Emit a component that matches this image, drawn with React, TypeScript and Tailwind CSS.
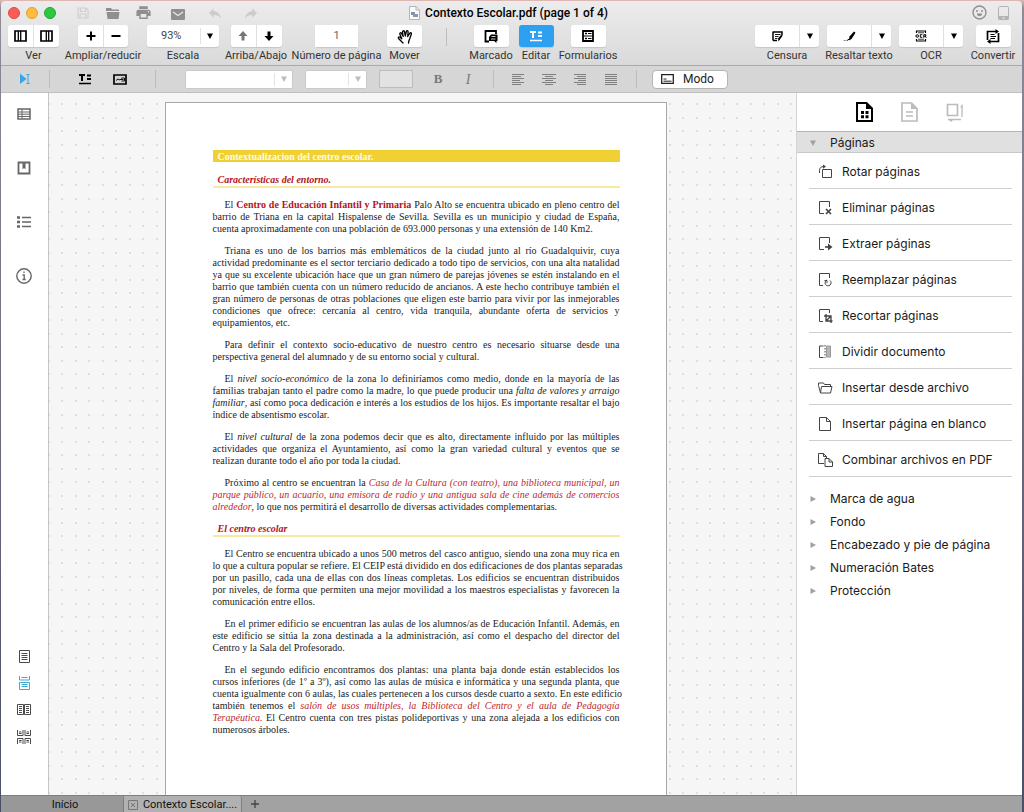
import type { ReactNode } from "react";
import { MdPrint, MdReply } from "react-icons/md";

/* ---------- small helpers ---------- */

type IconProps = { w?: number; h?: number; className?: string; children: ReactNode };

const Icon = ({ w = 16, h = 16, className = "", children }: IconProps) => (
  <svg
    width={w}
    height={h}
    viewBox={`0 0 ${w} ${h}`}
    fill="none"
    stroke="currentColor"
    aria-hidden="true"
    className={`shrink-0 ${className}`}
  >
    {children}
  </svg>
);

const ArrowDown = ({ className = "" }: { className?: string }) => (
  <Icon w={6} h={6} className={className}>
    <path d="M0 0.500h6L3 6z" fill="currentColor" stroke="none" />
  </Icon>
);

const Group = ({ label, width, children }: { label: string; width: string; children: ReactNode }) => (
  <div className={`flex shrink-0 flex-col items-center ${width}`}>
    <div className="flex h-[22px] rounded-[3px] shadow-[0_1px_1px_rgba(0,0,0,0.12)]">{children}</div>
    <span className="mt-[2px] text-[11px] leading-[14px] whitespace-nowrap text-[#333]">{label}</span>
  </div>
);

const Btn = ({ label, className = "", children }: { label: string; className?: string; children: ReactNode }) => (
  <button type="button" aria-label={label} className={`flex h-[22px] items-center justify-center bg-white ${className}`}>
    {children}
  </button>
);

const SplitButton = ({ label, children }: { label: string; children: ReactNode }) => (
  <>
    <Btn label={label} className="w-[44px] rounded-l-[3px]">
      {children}
    </Btn>
    <Btn label={`${label}: opciones`} className="w-[20px] rounded-r-[3px] border-l border-[#e0e0e0]">
      <ArrowDown />
    </Btn>
  </>
);

const Divider = () => <div className="h-[18px] w-px shrink-0 bg-[#bdbdbd]" />;

/* ---------- title bar ---------- */

const TitleBar = () => (
  <div className="flex h-[23px] items-center">
    <div className="flex flex-1 items-center pl-[7px]">
      <div className="flex gap-[6px]">
        <button type="button" aria-label="Cerrar" className="size-3 rounded-full border border-[#e2463f] bg-[#fc5b57]" />
        <button type="button" aria-label="Minimizar" className="size-3 rounded-full border border-[#e0a032] bg-[#fdbc40]" />
        <button type="button" aria-label="Maximizar" className="size-3 rounded-full border border-[#1fa534] bg-[#29c940]" />
      </div>
      <div className="flex items-center pl-[21px] text-[#8f8f8f]">
        <button type="button" aria-label="Guardar" className="w-[14px] text-[#cfcfcf]">
          <Icon w={12} h={12}>
            <path d="M1 1h8l2 2v8H1z M3.500 1v3.500h5V1 M3 11V7h6v4" strokeWidth="1.2" />
          </Icon>
        </button>
        <button type="button" aria-label="Abrir" className="ml-[15px] w-[14px]">
          <Icon w={14} h={12}>
            <path d="M0 1h5l1 1.500h7V4H0z M0.500 5h13L12.500 12h-11z" fill="currentColor" stroke="none" />
          </Icon>
        </button>
        <button type="button" aria-label="Imprimir" className="ml-[15px] w-4">
          <MdPrint size={17} />
        </button>
        <button type="button" aria-label="Enviar por correo" className="ml-[20px] w-[14px] pt-[3px]">
          <Icon w={14} h={11}>
            <rect width="14" height="11" rx="1" fill="currentColor" stroke="none" />
            <path d="M2 3l5 3.500L12 3" stroke="#e6e6e6" strokeWidth="1.4" />
          </Icon>
        </button>
        <button type="button" aria-label="Deshacer" className="ml-[22px] w-[15px] text-[#cccccc]">
          <MdReply size={16} />
        </button>
        <button type="button" aria-label="Rehacer" className="ml-[21px] w-[15px] text-[#cccccc]">
          <MdReply size={16} className="-scale-x-100" />
        </button>
      </div>
    </div>
    <h1 className="flex items-center gap-[5px] text-[12px] leading-4 font-medium text-black">
      <Icon w={11} h={14}>
        <path d="M0.500 0.500h6.500l3.500 3.500v9.500h-10z" fill="#fafafa" stroke="#b5b5b5" />
        <path d="M7 0.500v3.500h3.500" stroke="#b5b5b5" />
        <rect x="2" y="6" width="4" height="3" fill="#8391a3" stroke="none" />
        <rect x="4" y="8" width="5" height="3" fill="#8b98a8" stroke="none" />
      </Icon>
      Contexto Escolar.pdf (page 1 of 4)
    </h1>
    <div className="flex flex-1 items-center justify-end gap-[11px] pr-[13px] text-[#8f8f8f]">
      <button type="button" aria-label="Comentarios">
        <Icon w={15} h={15}>
          <circle cx="7.5" cy="7.5" r="6.5" strokeWidth="1.4" />
          <circle cx="5" cy="6" r="1" fill="currentColor" stroke="none" />
          <circle cx="10" cy="6" r="1" fill="currentColor" stroke="none" />
          <path d="M5 8.500h5c0 3.500-5 3.500-5 0z" fill="currentColor" stroke="none" />
        </Icon>
      </button>
      <button type="button" aria-label="Dispositivo" className="text-[#b3b3b3]">
        <Icon w={11} h={14}>
          <rect x="0.5" y="0.5" width="10" height="13" rx="1" />
          <path d="M0.500 10h10v3.500h-10z" fill="currentColor" stroke="none" />
          <path d="M4.500 12h2" stroke="#fff" />
        </Icon>
      </button>
    </div>
  </div>
);

/* ---------- main toolbar ---------- */

const TextEditIcon = () => (
  <Icon w={14} h={12}>
    <path d="M1 2h6M9 2.500h4M9 6h4" strokeWidth="1.800" />
    <path d="M4 1.500v6.500" strokeWidth="2" />
    <path d="M1 10.500h12" strokeWidth="1.700" />
  </Icon>
);

const Toolbar = () => (
  <div className="flex h-[41px] justify-between pt-px pr-[7px] pl-[7px] text-black">
    <div className="flex gap-[7px]">
      <Group label="Ver" width="w-[51px]">
        <Btn label="Panel izquierdo" className="w-[25px] rounded-l-[3px]">
          <Icon w={13} h={12}>
            <path d="M1 1h11v10H1z" strokeWidth="1.700" />
            <path d="M4.300 1v10M6.700 1v10" strokeWidth="1.300" />
          </Icon>
        </Btn>
        <Btn label="Panel derecho" className="w-[26px] rounded-r-[3px] border-l border-[#e0e0e0]">
          <Icon w={13} h={12}>
            <path d="M1 1h11v10H1z" strokeWidth="1.700" />
            <path d="M6.300 1v10M8.700 1v10" strokeWidth="1.300" />
          </Icon>
        </Btn>
      </Group>
      <Group label="Ampliar/reducir" width="w-[74px]">
        <Btn label="Ampliar" className="w-[25px] rounded-l-[3px]">
          <Icon w={10} h={10}>
            <path d="M5 0.500v9M0.500 5h9" strokeWidth="2" />
          </Icon>
        </Btn>
        <Btn label="Reducir" className="w-[25px] rounded-r-[3px] border-l border-[#e0e0e0]">
          <Icon w={10} h={10}>
            <path d="M0.500 5h9" strokeWidth="2" />
          </Icon>
        </Btn>
      </Group>
      <Group label="Escala" width="w-[72px]">
        <div className="flex w-[72px] items-center rounded-[3px] bg-white">
          <select
            aria-label="Escala"
            className="h-[22px] min-w-0 flex-1 appearance-none bg-transparent pl-[14px] text-[11px] text-[#444] outline-none"
          >
            <option>93%</option>
          </select>
          <span className="flex h-[16px] w-[19px] items-center justify-center border-l border-[#e3e3e3]">
            <ArrowDown />
          </span>
        </div>
      </Group>
      <Group label="Arriba/Abajo" width="w-[60px]">
        <Btn label="Página anterior" className="w-[25px] rounded-l-[3px] text-[#777]">
          <Icon w={10} h={10}>
            <path d="M5 0l4.500 5H6.500v4.500h-3V5h-3z" fill="currentColor" stroke="none" />
          </Icon>
        </Btn>
        <Btn label="Página siguiente" className="w-[26px] rounded-r-[3px] border-l border-[#e0e0e0]">
          <Icon w={10} h={10}>
            <path d="M5 10l4.500-5H6.500v-4.500h-3V5h-3z" fill="currentColor" stroke="none" />
          </Icon>
        </Btn>
      </Group>
      <Group label="Número de página" width="w-[87px]">
        <input
          aria-label="Número de página"
          defaultValue="1"
          className="w-[43px] bg-white text-center text-[11px] text-[#666] outline-none"
        />
      </Group>
      <Group label="Mover" width="w-[35px]">
        <Btn label="Mover" className="w-[35px] rounded-[3px]">
          <Icon w={16} h={15}>
            <path
              d="M6 14L3.500 11.500 1.500 9.500C0.700 8.200 2 7.500 3 8.300L4.800 9.800 2.800 5C2.500 3.700 4 3.200 4.600 4.500L6.200 7.500 5.500 3C5.400 1.500 7 1.300 7.500 2.800L8.300 7 9.300 2.500C9.700 1.100 11.300 1.400 11.100 2.900L10.700 7.500 12.700 4.300C13.500 3.200 14.800 3.900 14.300 5.200L12.800 9.500 12 11.500 11.500 14"
              strokeWidth="1.300"
              strokeLinejoin="round"
              strokeLinecap="round"
            />
          </Icon>
        </Btn>
      </Group>
      <div className="mt-[3px] ml-[17px]">
        <Divider />
      </div>
      <div className="ml-[16px] flex gap-[5px]">
        <Group label="Marcado" width="w-[42px]">
          <Btn label="Marcado" className="w-[35px] rounded-[3px]">
            <Icon w={14} h={13}>
              <path d="M5 11.500H1.500v-10.500h10.500v3" strokeWidth="1.800" />
              <path d="M5 7l2-2.500h6.500V11h-1v2l-2.500-2H5z" fill="currentColor" stroke="none" />
              <path d="M7.500 6.500h4M7 9h4.500" stroke="#fff" strokeWidth="0.800" />
            </Icon>
          </Btn>
        </Group>
        <Group label="Editar" width="w-[38px]">
          <button
            type="button"
            aria-label="Editar"
            aria-pressed="true"
            className="flex h-[22px] w-[35px] items-center justify-center rounded-[3px] bg-[#2ea0f2] text-white"
          >
            <TextEditIcon />
          </button>
        </Group>
        <Group label="Formularios" width="w-[56px]">
          <Btn label="Formularios" className="w-[35px] rounded-[3px]">
            <Icon w={12} h={12}>
              <path d="M1 1h10v10H1z" strokeWidth="1.800" />
              <path d="M1 6h10M6 3.500h3.500M6 8.500h3.500" strokeWidth="1.200" />
              <path d="M3 3.500h2M3 8.500h2" strokeWidth="1.600" />
            </Icon>
          </Btn>
        </Group>
      </div>
    </div>
    <div className="flex gap-[8px]">
      <Group label="Censura" width="w-[64px]">
        <SplitButton label="Censura">
          <Icon w={11} h={11}>
            <path d="M1 0.500v9M1 1h9v3M1 9.500l4 0" strokeWidth="1.500" />
            <path d="M3 3.500h5.500M3 5.500h3.500M3 7.500h2.500" strokeWidth="0.900" />
            <path d="M10.800 4.500L6.500 10.500l-0.500-3L9 4z" fill="currentColor" stroke="none" />
          </Icon>
        </SplitButton>
      </Group>
      <Group label="Resaltar texto" width="w-[64px]">
        <SplitButton label="Resaltar texto">
          <Icon w={13} h={11}>
            <path d="M11 0.500l1.500 1.200L8.500 8 6 9.500 6.500 5.500z" fill="currentColor" stroke="none" />
            <path d="M0.500 9.500h3" stroke="#999" />
            <path d="M4 9.500l3-2" />
          </Icon>
        </SplitButton>
      </Group>
      <Group label="OCR" width="w-[64px]">
        <SplitButton label="OCR">
          <Icon w={12} h={12}>
            <path d="M1.500 3V1h9v2M1.500 9v2h9V9" strokeWidth="1.200" />
            <path d="M3 2.800h6M3 9.200h6" strokeWidth="0.800" />
            <circle cx="2.2" cy="6" r="1.300" />
            <path d="M7.300 4.700H5.300v2.600h2" />
            <path d="M8.800 7.800V4.700h2v1.500h-2M10 6l1.300 1.800" />
          </Icon>
        </SplitButton>
      </Group>
      <Group label="Convertir" width="w-[44px]">
        <Btn label="Convertir" className="w-[35px] rounded-[3px]">
          <Icon w={14} h={15}>
            <path d="M1.500 11V2.500h9M12.500 4v8.500h-9" strokeWidth="1.700" />
            <path d="M9.500 0l3.500 2.500-3.500 2.500zM4.500 10L1 12.500 4.500 15z" fill="currentColor" stroke="none" />
            <path d="M4.500 5.500h4M4.500 7.500h5.500M4.500 9.500h4.500" strokeWidth="1.200" />
          </Icon>
        </Btn>
      </Group>
    </div>
  </div>
);

/* ---------- format bar ---------- */

const alignLines = [
  { label: "Alinear a la izquierda", d: "M0 0.500h12M0 2.500h9M0 4.500h12M0 6.500h8M0 8.500h12M0 10.500h9" },
  { label: "Centrar", d: "M0 0.500h14M3 2.500h8M0 4.500h14M3 6.500h8M0 8.500h14M3 10.500h8" },
  { label: "Alinear a la derecha", d: "M0 0.500h12M3 2.500h9M0 4.500h12M4 6.500h8M0 8.500h12M3 10.500h9" },
  { label: "Justificar", d: "M0 0.500h12M0 2.500h12M0 4.500h12M0 6.500h12M0 8.500h12M0 10.500h12" },
];

const FormatSelect = ({ label, width }: { label: string; width: string }) => (
  <div className={`flex h-[19px] items-center rounded-[2px] border border-[#cacaca] bg-white ${width}`}>
    <select disabled aria-label={label} className="h-full min-w-0 flex-1 appearance-none bg-transparent text-[11px]">
      <option></option>
    </select>
    <span className="flex h-[13px] w-[18px] items-center justify-center border-l border-[#e3e3e3] text-[#bcbcbc]">
      <ArrowDown />
    </span>
  </div>
);

const FormatBar = () => (
  <div className="flex h-7 items-center border-t border-b border-t-[#a9a9a9] border-b-[#bfbfbf] bg-[#d6d6d6]">
    <button type="button" aria-label="Seleccionar" className="flex w-12 justify-center pr-px text-[#35a7e6]">
      <Icon w={12} h={12}>
        <path d="M1 0.500l6.500 5.500L1 11z" fill="currentColor" stroke="none" />
        <path d="M7.500 1.500h3M7.500 10.500h3M9 1.500v9" />
      </Icon>
    </button>
    <Divider />
    <button type="button" aria-label="Añadir texto" className="ml-[28px]">
      <TextEditIcon />
    </button>
    <button type="button" aria-label="Añadir imagen" className="ml-[21px]">
      <Icon w={14} h={11}>
        <path d="M1 1h12v9H1z" strokeWidth="1.700" />
        <path d="M3 6.500l2-1.500 2 1 1.500-1.500M8.500 4h3v3h-3M8 5.500h2.500" strokeWidth="0.900" />
      </Icon>
    </button>
    <div className="ml-[28px]">
      <Divider />
    </div>
    <div className="ml-[29px] flex gap-3">
      <FormatSelect label="Fuente" width="w-[108px]" />
      <FormatSelect label="Tamaño" width="w-[62px]" />
      <button type="button" aria-label="Color" className="h-[18px] w-[34px] border border-[#bdbdbd] bg-[#e2e2e2]" />
    </div>
    <button type="button" aria-label="Negrita" className="ml-[19px] w-3 font-['Liberation_Serif',serif] text-[13px] font-bold text-[#7a7a7a]">
      B
    </button>
    <button type="button" aria-label="Cursiva" className="ml-[18px] w-3 font-['Liberation_Serif',serif] text-[14px] text-[#7a7a7a] italic">
      I
    </button>
    <div className="ml-[19px]">
      <Divider />
    </div>
    <div className="ml-[17px] flex gap-[17px] text-[#808080]">
      {alignLines.map((a) => (
        <button type="button" key={a.label} aria-label={a.label} className="flex w-[14px] justify-center">
          <Icon w={a.label === "Centrar" ? 14 : 12} h={11}>
            <path d={a.d} />
          </Icon>
        </button>
      ))}
    </div>
    <div className="ml-[18px]">
      <Divider />
    </div>
    <button
      type="button"
      className="ml-[15px] flex h-[19px] w-[76px] items-center gap-[9px] rounded-[4px] border border-[#b4b4b4] bg-white pl-[8px] text-[12px] leading-4 text-[#222]"
    >
      <Icon w={13} h={10}>
        <path d="M0.700 0.700h11.600v8.600H0.700z" strokeWidth="1.300" />
        <path d="M2.500 5h3M2.500 7.200h8" />
      </Icon>
      Modo
    </button>
  </div>
);

/* ---------- left rail ---------- */

const LeftRail = () => (
  <nav className="flex w-12 shrink-0 flex-col items-center justify-between border-r border-[#c6c6c6] bg-white pt-[12px] pr-px pb-[51px] text-[#666]">
    <div className="flex flex-col gap-[36px]">
      <button type="button" aria-label="Miniaturas" className="flex h-[18px] items-center justify-center">
        <Icon w={14} h={12}>
          <path d="M1 1h12v10H1z" strokeWidth="1.500" />
          <path d="M1 4h12M1 6.200h12M1 8.500h12M5 1v10" />
        </Icon>
      </button>
      <button type="button" aria-label="Marcadores" className="flex h-[18px] items-center justify-center">
        <Icon w={14} h={14}>
          <path d="M1.500 1.500h11v11h-11z" strokeWidth="1.800" />
          <path d="M5.500 1v7.500L7 7l1.500 1.500V1z" fill="currentColor" stroke="none" />
        </Icon>
      </button>
      <button type="button" aria-label="Esquema" className="flex h-[18px] items-center justify-center">
        <Icon w={14} h={12}>
          <path d="M0 1.500h3M0 6h3M0 10.500h3" strokeWidth="2.500" />
          <path d="M5 1.500h9M5 6h9M5 10.500h9" strokeWidth="1.400" />
        </Icon>
      </button>
      <button type="button" aria-label="Información" className="flex h-[18px] items-center justify-center">
        <Icon w={16} h={16}>
          <circle cx="8" cy="8" r="7.200" strokeWidth="1.400" />
          <path d="M8 3.500v1.500M6.500 7h1.700v4.500M6.500 11.500h3.200" strokeWidth="1.300" />
        </Icon>
      </button>
    </div>
    <div className="flex flex-col gap-[13px] text-[#4a4a4a]">
      <button type="button" aria-label="Una página" className="flex h-[14px] items-center justify-center">
        <Icon w={11} h={13}>
          <path d="M0.500 0.500h10v12h-10zM2.500 3.500h6M2.500 5.500h6M2.500 7.500h6M2.500 9.500h6" />
        </Icon>
      </button>
      <button type="button" aria-label="Continua" aria-pressed="true" className="flex h-[14px] items-center justify-center text-[#3fa9cf]">
        <Icon w={11} h={14}>
          <path d="M0.500 0v4h10V0M2.500 1.500h6M0.500 6.500h10v7h-10zM2.500 8.500h6M2.500 10.500h6" />
        </Icon>
      </button>
      <button type="button" aria-label="Dos páginas" className="flex h-[14px] items-center justify-center">
        <Icon w={14} h={12}>
          <path d="M0.500 0.500h6v10h-6zM7.500 0.500h6v10h-6zM2 2.500h3M2 4.500h3M2 6.500h3M2 8.500h3M9 2.500h3M9 4.500h3M9 6.500h3M9 8.500h3" />
        </Icon>
      </button>
      <button type="button" aria-label="Dos páginas continuas" className="flex h-[14px] items-center justify-center">
        <Icon w={14} h={14}>
          <path d="M0.500 0v5.500h5.500V0M8 0v5.500h5.500V0M0.500 14V8.500h5.500V14M8 14V8.500h5.500V14M2 2h2.500M2 3.500h2.500M9.500 2h2.500M9.500 3.500h2.500M2 10.500h2.500M2 12h2.500M9.500 10.500h2.500M9.500 12h2.500" />
        </Icon>
      </button>
    </div>
  </nav>
);

/* ---------- document ---------- */

const Red = ({ children }: { children: ReactNode }) => <em className="text-[#c0272d]">{children}</em>;

const Para = ({ children }: { children: ReactNode }) => <p className="mb-[10px] text-justify indent-3">{children}</p>;

const Heading = ({ children }: { children: ReactNode }) => (
  <h3 className="mb-[11px] border-b-2 border-[#f8e9a0] pl-[5px] font-bold text-[#b3141c] italic">{children}</h3>
);

const Document = () => (
  <main className="relative flex min-w-0 flex-1 justify-center overflow-hidden bg-[#f6f6f6] pt-[9px] pr-[14px]">
    <svg className="absolute inset-0 h-full w-full" aria-hidden="true">
      <defs>
        <pattern id="dots" width="27" height="27" patternUnits="userSpaceOnUse" x="12" y="10">
          <path d="M0 0h2v2H0zM14 0h2v2h-2zM0 14h2v2H0zM14 14h2v2h-2z" fill="#dedede" />
        </pattern>
      </defs>
      <rect width="100%" height="100%" fill="url(#dots)" />
    </svg>
    {/* page */}
    <div className="relative w-[502px] shrink-0 border border-b-0 border-[#a8a8a8] bg-white pt-[47px] pr-[46px] pl-[47px] font-['Liberation_Serif','Times_New_Roman',serif] text-[10px] leading-3 text-[#1c1c1c]">
      <h2 className="mb-3 h-3 bg-[#f0d033] pl-[5px] leading-[13px] font-bold text-[#fffbe6]">
        Contextualizacion del centro escolar.
      </h2>
      <Heading>Características del entorno.</Heading>
      <Para>
        El <strong className="text-[#b3141c]">Centro de Educación Infantil y Primaria</strong> Palo Alto se encuentra
        ubicado en pleno centro del barrio de Triana en la capital Hispalense de Sevilla. Sevilla es un municipio y
        ciudad de España, cuenta aproximadamente con una población de 693.000 personas y una extensión de 140 Km2.
      </Para>
      <Para>
        Triana es uno de los barrios más emblemáticos de la ciudad junto al río Guadalquivir, cuya actividad
        predominante es el sector terciario dedicado a todo tipo de servicios, con una alta natalidad ya que su
        excelente ubicación hace que un gran número de parejas jóvenes se estén instalando en el barrio que también
        cuenta con un número reducido de ancianos. A este hecho contribuye también el gran número de personas de otras
        poblaciones que eligen este barrio para vivir por las inmejorables condiciones que ofrece: cercanía al centro,
        vida tranquila, abundante oferta de servicios y equipamientos, etc.
      </Para>
      <Para>
        Para definir el contexto socio-educativo de nuestro centro es necesario situarse desde una perspectiva general
        del alumnado y de su entorno social y cultural.
      </Para>
      <Para>
        El <em>nivel socio-económico</em> de la zona lo definiríamos como medio, donde en la mayoría de las familias
        trabajan tanto el padre como la madre, lo que puede producir una <em>falta de valores y arraigo familiar</em>,
        así como poca dedicación e interés a los estudios de los hijos. Es importante resaltar el bajo índice de
        absentismo escolar.
      </Para>
      <Para>
        El <em>nivel cultural</em> de la zona podemos decir que es alto, directamente influido por las múltiples
        actividades que organiza el Ayuntamiento, así como la gran variedad cultural y eventos que se realizan durante
        todo el año por toda la ciudad.
      </Para>
      <Para>
        Próximo al centro se encuentran la{" "}
        <Red>
          Casa de la Cultura (con teatro), una biblioteca municipal, un parque público, un acuario, una emisora de radio
          y una antigua sala de cine además de comercios alrededor
        </Red>
        , lo que nos permitirá el desarrollo de diversas actividades complementarias.
      </Para>
      <Heading>El centro escolar</Heading>
      <Para>
        El Centro se encuentra ubicado a unos 500 metros del casco antiguo, siendo una zona muy rica en{" "}
        <span className="whitespace-nowrap">
          lo que a cultura popular se refiere. El CEIP está dividido en dos edificaciones de dos plantas separadas
        </span>{" "}
        por un pasillo, cada una de ellas con dos líneas completas. Los edificios se encuentran distribuidos por
        niveles, de forma que permiten una mejor movilidad a los maestros especialistas y favorecen la comunicación
        entre ellos.
      </Para>
      <Para>
        En el primer edificio se encuentran las aulas de los alumnos/as de Educación Infantil. Además, en este edificio
        se sitúa la zona destinada a la administración, así como el despacho del director del Centro y la Sala del
        Profesorado.
      </Para>
      <Para>
        En el segundo edificio encontramos dos plantas: una planta baja donde están establecidos los cursos inferiores
        (de 1º a 3º), así como las aulas de música e informática y una segunda planta, que{" "}
        <span className="whitespace-nowrap">
          cuenta igualmente con 6 aulas, las cuales pertenecen a los cursos desde cuarto a sexto. En este edificio
        </span>{" "}
        también tenemos el <Red>salón de usos múltiples, la Biblioteca del Centro y el aula de Pedagogía Terapéutica.</Red>{" "}
        El Centro cuenta con tres pistas polideportivas y una zona alejada a los edificios con numerosos árboles.
      </Para>
    </div>
  </main>
);

/* ---------- right panel ---------- */

const pageActions = [
  {
    label: "Rotar páginas",
    icon: (
      <>
        <path d="M4.500 5.500h9v8h-9zM1.500 9V6.500q0-4 4.500-4" />
        <path d="M5 0.500l3 2-3 2.200z" fill="currentColor" stroke="none" />
      </>
    ),
  },
  {
    label: "Eliminar páginas",
    icon: (
      <>
        <path d="M6 13.500H1.500V1.500h10V7" />
        <path d="M8 9l5 5M13 9l-5 5" strokeWidth="1.700" />
      </>
    ),
  },
  {
    label: "Extraer páginas",
    icon: (
      <>
        <path d="M6 13.500H1.500V1.500h10V7" />
        <path d="M7 11h4" strokeWidth="1.600" />
        <path d="M10 7.500l4.500 3.500-4.500 3.500z" fill="currentColor" stroke="none" />
      </>
    ),
  },
  {
    label: "Reemplazar páginas",
    icon: <path d="M5 13.500H1.500V1.500h10V6M9 8a3 3 0 1 0 3 0.500M6.500 8.500h2.500v2.500" />,
  },
  {
    label: "Recortar páginas",
    icon: (
      <>
        <path d="M5 13.500H1.500V1.500h10V5" />
        <path d="M8 6v7h6.500M6 8h7v7M8.500 12.500l4-4" strokeWidth="1.300" />
      </>
    ),
  },
  {
    label: "Dividir documento",
    icon: (
      <>
        <path d="M8.500 2h4v11h-4z" fill="#b5b5b5" stroke="#999" />
        <path d="M5.500 13.500h-4V2h4" />
        <path d="M7 1v13" strokeDasharray="1.500 1.500" />
      </>
    ),
  },
  {
    label: "Insertar desde archivo",
    icon: <path d="M2.500 13L0.500 5.500V3h5l1 1.500h6v2M2.500 13h10l1.500-6.500H3.500z" />,
  },
  { label: "Insertar página en blanco", icon: <path d="M1.500 1.500h7l4 4v9h-11zM8.500 1.500v4h4" /> },
  {
    label: "Combinar archivos en PDF",
    icon: <path d="M6 11.500H0.500v-10h5l3 3v1.500M5.500 1.500v3h3M7 6.500h4l3.500 3.500v4.500H7zM11 6.500V10h3.500" />,
  },
];

const sections = ["Marca de agua", "Fondo", "Encabezado y pie de página", "Numeración Bates", "Protección"];

const RightPanel = () => (
  <aside className="w-[226px] shrink-0 border-l border-[#d4d4d4] bg-white font-['Inter','Roboto',sans-serif] text-[12px] text-[#1a1a1a]">
    <div className="flex h-[38px] items-center justify-center gap-[28px]">
      <button type="button" aria-label="Páginas" className="text-black">
        <Icon w={17} h={20}>
          <path d="M1 1h9.500l5.500 5.500V19H1z" strokeWidth="2" />
          <path d="M10 1v6h6z" fill="currentColor" stroke="none" />
          <path d="M5 9h3v3H5zM9.500 9h3v3h-3zM5 13.200h3v3H5zM9.500 13.200h3v3h-3z" fill="currentColor" stroke="none" />
        </Icon>
      </button>
      <button type="button" aria-label="Documento" className="text-[#bcbcbc]">
        <Icon w={17} h={20}>
          <path d="M1 1h9.500l5.500 5.500V19H1z" strokeWidth="1.700" />
          <path d="M10 1v6h6z" fill="currentColor" stroke="none" />
          <path d="M5 10h7M5 14h7" strokeWidth="1.500" />
        </Icon>
      </button>
      <button type="button" aria-label="Tamaño" className="text-[#bcbcbc]">
        <Icon w={18} h={19}>
          <path d="M1.500 1.500h10v11h-10z" strokeWidth="1.700" />
          <path d="M16 14V2M2 16.500h13" strokeWidth="1.300" />
          <path d="M14 4.500L16.500 1v3.500zM5.500 19L2 16.500h5z" fill="currentColor" stroke="none" />
        </Icon>
      </button>
    </div>
    <button
      type="button"
      aria-expanded="true"
      className="flex h-[22px] w-full items-center border-t border-b border-t-[#b4b4b4] border-b-[#c8c8c8] bg-[#e0e0e0] pt-px pl-[13px]"
    >
      <ArrowDown className="mr-[14px] text-[#a0a0a0]" />
      Páginas
    </button>
    <ul className="pr-[10px] pl-3">
      {pageActions.map((a) => (
        <li key={a.label} className="flex h-9 border-b border-[#cfcfcf]">
          <button type="button" className="flex w-full items-center gap-[9px] pt-[3px] pl-[9px] text-left">
            <Icon w={15} h={16} className="text-[#444]">
              {a.icon}
            </Icon>
            {a.label}
          </button>
        </li>
      ))}
    </ul>
    <div className="mt-[10px]">
      {sections.map((s) => (
        <button type="button" key={s} aria-expanded="false" className="flex h-[23px] w-full items-center pl-[13px] text-left">
          <ArrowDown className="mr-[14px] -rotate-90 text-[#a0a0a0]" />
          {s}
        </button>
      ))}
    </div>
  </aside>
);

/* ---------- bottom tabs ---------- */

const TabBar = () => (
  <div className="flex h-[17px] shrink-0 border-t border-[#7e7e7e] bg-[#a2a2a2] text-[11px] leading-4 text-[#111]">
    <button type="button" className="w-[123px] rounded-tr-[3px] border-r border-[#7e7e7e] bg-[#989898] pt-px pl-[6px] leading-4">
      Início
    </button>
    <div className="flex w-[118px] items-center justify-center gap-[5px] rounded-t-[3px] border-r border-[#7e7e7e] bg-[#b1b1b1] pt-px">
      <button type="button" aria-label="Cerrar pestaña" className="text-[#777]">
        <Icon w={10} h={10}>
          <path d="M0.500 0.500h9v9h-9zM3 3l4 4M7 3L3 7" />
        </Icon>
      </button>
      <button type="button" className="whitespace-nowrap">
        Contexto Escolar....
      </button>
    </div>
    <button type="button" aria-label="Nueva pestaña" className="flex w-[26px] items-center justify-center text-[#444]">
      <Icon w={8} h={8}>
        <path d="M4 0v8M0 4h8" strokeWidth="1.300" />
      </Icon>
    </button>
  </div>
);

const App = () => {
  return (
    <div className="flex h-screen flex-col overflow-hidden bg-linear-to-b from-[#e3b9b3] via-[#8f8b97] via-1% to-[#4a4f66] pt-px pr-[2px] pl-px font-['Roboto','Helvetica_Neue',sans-serif]">
      <header className="shrink-0 overflow-hidden rounded-t-[4px] bg-linear-to-b from-[#ececec] to-[#d2d2d2]">
        <TitleBar />
        <Toolbar />
        <FormatBar />
      </header>
      <div className="flex min-h-0 flex-1">
        <LeftRail />
        <Document />
        <RightPanel />
      </div>
      <TabBar />
    </div>
  );
};

export default App;
